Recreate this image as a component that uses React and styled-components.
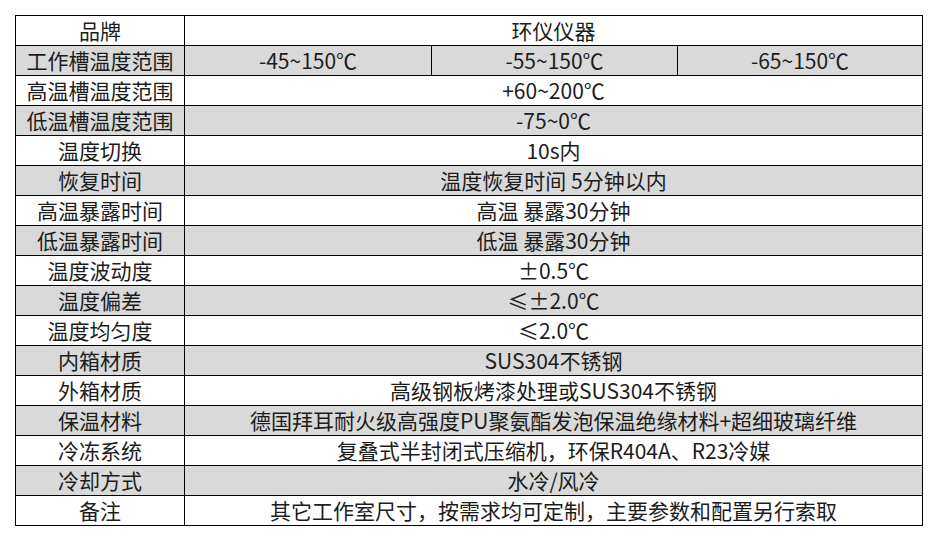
import React from "react";
import styled, { createGlobalStyle } from "styled-components";

const Global = createGlobalStyle`
  html, body {
    margin: 0;
    padding: 0;
    background: #ffffff;
  }
  body {
    font-family: "Noto Sans CJK SC", "Noto Sans", sans-serif;
  }
`;

const Page = styled.div`
  padding: 15px 0 0 15px;
`;

const Table = styled.table`
  border-collapse: collapse;
  table-layout: fixed;
  width: 907px;
  color: #1c1c1c;
  font-size: 21px;
`;

const Col = styled.col`
  width: ${(p) => p.$w}px;
`;

const Row = styled.tr`
  background: ${(p) => (p.$shaded ? "#d9d9d9" : "#ffffff")};
`;

const Cell = styled.td`
  border: 1px solid #000;
  height: 27px;
  padding: 0 0 2px;
  text-align: center;
  vertical-align: middle;
  line-height: 26px;
  white-space: nowrap;
  overflow: hidden;
`;

const widths = [169, 247, 246, 245];

const rows = [
  ["品牌", "环仪仪器"],
  ["工作槽温度范围", ["-45~150℃", "-55~150℃", "-65~150℃"]],
  ["高温槽温度范围", "+60~200℃"],
  ["低温槽温度范围", "-75~0℃"],
  ["温度切换", "10s内"],
  ["恢复时间", "温度恢复时间 5分钟以内"],
  ["高温暴露时间", "高温 暴露30分钟"],
  ["低温暴露时间", "低温 暴露30分钟"],
  ["温度波动度", "±0.5℃"],
  ["温度偏差", "≤±2.0℃"],
  ["温度均匀度", "≤2.0℃"],
  ["内箱材质", "SUS304不锈钢"],
  ["外箱材质", "高级钢板烤漆处理或SUS304不锈钢"],
  ["保温材料", "德国拜耳耐火级高强度PU聚氨酯发泡保温绝缘材料+超细玻璃纤维"],
  ["冷冻系统", "复叠式半封闭式压缩机，环保R404A、R23冷媒"],
  ["冷却方式", "水冷/风冷"],
  ["备注", "其它工作室尺寸，按需求均可定制，主要参数和配置另行索取"],
];

export default function App() {
  return (
    <Page>
      <Global />
      <Table>
        <colgroup>
          {widths.map((w, i) => (
            <Col key={i} $w={w} />
          ))}
        </colgroup>
        <tbody>
          {rows.map(([label, value], i) => (
            <Row key={label} $shaded={i % 2 === 1}>
              <Cell>{label}</Cell>
              {Array.isArray(value) ? (
                value.map((v) => <Cell key={v}>{v}</Cell>)
              ) : (
                <Cell colSpan={3}>{value}</Cell>
              )}
            </Row>
          ))}
        </tbody>
      </Table>
    </Page>
  );
}
